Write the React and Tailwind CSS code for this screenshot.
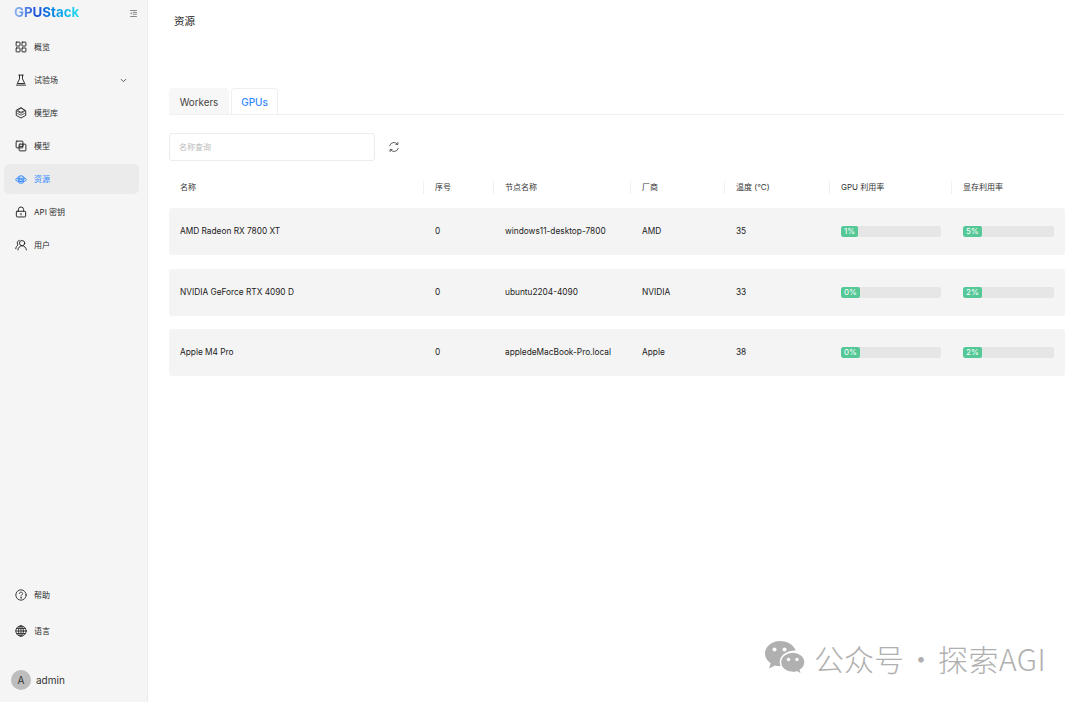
import React from "react";
import { ChevronDown } from "lucide-react";

const Svg = ({ className, children, sw = 1.3 }) => (
  <svg viewBox="0 0 16 16" fill="none" stroke="currentColor" strokeWidth={sw} strokeLinejoin="round" strokeLinecap="round" className={className}>
    {children}
  </svg>
);

const Grid = ({ className }) => (
  <Svg className={className}>
    <rect x="1.500" y="1.500" width="5.200" height="5.200" rx=".5" />
    <rect x="9.300" y="1.500" width="5.200" height="5.200" rx=".5" />
    <rect x="1.500" y="9.300" width="5.200" height="5.200" rx=".5" />
    <rect x="9.300" y="9.300" width="5.200" height="5.200" rx=".5" />
  </Svg>
);

const Flask = ({ className }) => (
  <Svg className={className}>
    <path d="M5 1.500h6M6 1.500v5L3 12.700h10L10 6.500v-5" />
    <path d="M1.800 14.800h12.400" />
  </Svg>
);

const Stack = ({ className }) => (
  <Svg className={className}>
    <path d="M8 1.300 14.300 4.800v6.400L8 14.700 1.700 11.200V4.800z" />
    <path d="M3.500 6 8 8.300 12.500 6M3.500 8.700 8 11l4.500-2.300M8 1.300 3.500 4.800 8 7l4.500-2.200z" strokeWidth="1" />
  </Svg>
);

const Models = ({ className }) => (
  <Svg className={className}>
    <rect x="1.500" y="1.500" width="9" height="9" rx="1" />
    <rect x="5.500" y="5.500" width="9" height="9" rx="1" />
    <path d="M5.500 8.500h5V5.500" />
  </Svg>
);

const Cloud = ({ className }) => (
  <Svg className={className}>
    <path d="M3.600 8a4.400 4.400 0 0 1 8.800 0" />
    <path d="M3.400 6.600C2 6.900 1 7.800 1 8.800c0 1.100 1.100 2 2.600 2.200M12.600 6.600c1.400.3 2.400 1.200 2.400 2.200 0 1.100-1.100 2-2.600 2.200" />
    <rect x="5" y="7" width="6" height="6.400" rx="1" />
    <path d="M5 9.100h6M5 11.200h6" />
  </Svg>
);

const LockI = ({ className }) => (
  <Svg className={className}>
    <rect x="1.800" y="7" width="12.400" height="7.600" rx="1" />
    <path d="M4.500 7V4.800a3.500 3.500 0 0 1 7 0V7M8 9.800v2" />
  </Svg>
);

const UsersI = ({ className }) => (
  <Svg className={className}>
    <circle cx="9.500" cy="5.500" r="3.500" />
    <path d="M3.800 14.500c.5-3 2.800-5.500 5.700-5.500s5.200 2.500 5.700 5.500" />
    <path d="M5.700 1.800C3.900 2.200 3 3.800 3 5.300c0 1 .4 1.900 1 2.600C2.300 9 1.200 11 1 13" />
  </Svg>
);

const Help = ({ className }) => (
  <Svg className={className} sw="1.200">
    <circle cx="8" cy="8" r="6.900" />
    <path d="M5.900 6.200C6 4.900 6.900 4.200 8 4.200c1.200 0 2.100.8 2.100 1.900 0 1.700-2.100 1.700-2.100 3.400" />
    <circle cx="8" cy="11.800" r=".4" />
  </Svg>
);

const GlobeI = ({ className }) => (
  <Svg className={className} sw="1.200">
    <circle cx="8" cy="8" r="6.900" />
    <ellipse cx="8" cy="8" rx="3.200" ry="6.900" />
    <path d="M8 1.100v13.800M1.100 8h13.800M2.100 4.600h11.800M2.100 11.400h11.800" />
  </Svg>
);

const Refresh = ({ className }) => (
  <Svg className={className} sw="1.200">
    <path d="M2.200 6.300A6 6 0 0 1 12.600 4.200" />
    <path d="M13.800 9.700A6 6 0 0 1 3.400 11.800" />
    <path d="M13.200 1.800v2.800h-2.700M2.800 14.200v-2.800h2.700" />
  </Svg>
);

const Indent = ({ className }) => (
  <svg viewBox="0 0 12 12" fill="none" stroke="currentColor" strokeWidth="1" className={className}>
    <path d="M1.500 2h9M5 4.500h5.500M5 7h5.500M1.500 10h9" />
    <path d="M3.500 4.200 1.600 5.800l1.900 1.500z" fill="currentColor" stroke="none" />
  </svg>
);

const Wechat = () => (
  <svg viewBox="0 0 42 36" className="w-[42px] h-[36px]" fill="#b0b0b0">
    <path d="M16 1C7.700 1 1 6.600 1 13.500c0 4 2.200 7.400 5.700 9.700L5 28.500l6-3.100c1.600.4 3.200.7 5 .7.500 0 1 0 1.500-.1-.4-1.300-.6-2.600-.6-3.900 0-6.500 6.100-11.700 13.600-11.700h1.200C29.800 5 23.500 1 16 1z" />
    <path d="M41 22.200c0-5.700-5.500-10.300-12.200-10.300S16.500 16.500 16.500 22.200s5.600 10.300 12.300 10.300c1.400 0 2.800-.2 4-.6l4.900 2.700-1.300-4.400c2.800-1.900 4.600-4.800 4.600-8z" stroke="#fff" strokeWidth="1.500" />
    <circle cx="10.500" cy="9.500" r="2" fill="#fff" />
    <circle cx="20.500" cy="9.500" r="2" fill="#fff" />
    <circle cx="24.500" cy="19.500" r="1.700" fill="#fff" />
    <circle cx="33" cy="19.500" r="1.700" fill="#fff" />
  </svg>
);

const NavItem = ({ icon: I, label, active, chevron }) => (
  <div className={`h-[30px] mb-[3px] ml-1 mr-2 rounded-[5px] flex items-center pl-[11px] pr-[11px] gap-[7px] ${active ? "bg-[#ebebeb] text-[#2f88ff]" : "text-[#2a2a2a]"}`}>
    <I className="w-[12px] h-[12px] shrink-0" />
    <span className="text-[8px] leading-none">{label}</span>
    {chevron && <ChevronDown className="w-[9px] h-[9px] ml-auto" strokeWidth={2} />}
  </div>
);

const Bar = ({ pct, w }) => (
  <div className="h-[11px] bg-[#e6e6e6] rounded-[2px] overflow-hidden w-full">
    <div style={{ width: w }} className="h-full bg-[#54c896] rounded-[2px] text-white text-[8px] leading-[11px] pl-[3px]">{pct}</div>
  </div>
);

const gridCols = "grid grid-cols-[254px_70px_137px_94px_105px_122px_114px]";

const rows = [
  ["AMD Radeon RX 7800 XT", "0", "windows11-desktop-7800", "AMD", "35", ["1%", 17], ["5%", 19], "h-[47px] mb-[14px]"],
  ["NVIDIA GeForce RTX 4090 D", "0", "ubuntu2204-4090", "NVIDIA", "33", ["0%", 19], ["2%", 19], "h-[47px] mb-[13px]"],
  ["Apple M4 Pro", "0", "appledeMacBook-Pro.local", "Apple", "38", ["0%", 19], ["2%", 19], "h-[47px]"],
];

const heads = ["名称", "序号", "节点名称", "厂商", "温度 (°C)", "GPU 利用率", "显存利用率"];

export default function App() {
  return (
    <div className="relative w-[1080px] h-[702px] flex bg-white overflow-hidden font-['Inter','Noto_Sans_CJK_SC',sans-serif] text-[#222]">
      <aside className="w-[148px] shrink-0 h-full bg-[#f5f5f5] border-r border-[#ececec] flex flex-col">
        <div className="h-[26px] flex items-center justify-between pl-[14px] pr-[9px]">
          <span className="text-[13.300px] font-bold leading-none bg-gradient-to-r from-[#93b8f0] via-[#1a48d8] via-35% to-[#2fe0f0] bg-clip-text text-transparent">GPUStack</span>
          <Indent className="w-[9px] h-[9px] text-[#666]" />
        </div>
        <nav className="pt-[6px]">
          <NavItem icon={Grid} label="概览" />
          <NavItem icon={Flask} label="试验场" chevron />
          <NavItem icon={Stack} label="模型库" />
          <NavItem icon={Models} label="模型" />
          <NavItem icon={Cloud} label="资源" active />
          <NavItem icon={LockI} label="API 密钥" />
          <NavItem icon={UsersI} label="用户" />
        </nav>
        <div className="mt-auto">
          <div className="h-[30px] mx-1 flex items-center pl-[11px] gap-[7px] text-[#2a2a2a] mb-[6px]">
            <Help className="w-[12px] h-[12px]" />
            <span className="text-[8px]">帮助</span>
          </div>
          <div className="h-[30px] mx-1 flex items-center pl-[11px] gap-[7px] text-[#2a2a2a] mb-[24px]">
            <GlobeI className="w-[12px] h-[12px]" />
            <span className="text-[8px]">语言</span>
          </div>
          <div className="h-[20px] flex items-center pl-[11px] gap-[5px] mb-[12px]">
            <div className="w-[20px] h-[20px] rounded-full bg-[#bdbdbd] flex items-center justify-center text-[10px] text-[#333]">A</div>
            <span className="text-[10px] text-[#333]">admin</span>
          </div>
        </div>
      </aside>

      <main className="flex-1 pl-[21px] pr-[15px]">
        <div className="h-[89px] pt-[14px] pl-[5px]">
          <h1 className="text-[10.500px] leading-[15px] text-[#222]">资源</h1>
        </div>
        <div className="h-[26px] flex items-end gap-[2px] border-b border-[#f0f0f0] mb-[18px]">
          <div className="h-[26px] w-[60px] pt-[4px] bg-[#f7f7f7] rounded-t-[4px] flex items-center justify-center text-[9.800px] text-[#444]">Workers</div>
          <div className="h-[26px] w-[47px] pt-[2px] bg-white border border-[#f0f0f0] border-b-0 rounded-t-[4px] flex items-center justify-center text-[10px] font-medium text-[#2f88ff]">GPUs</div>
        </div>
        <div className="flex items-center h-[28px] mb-[13px]">
          <div className="w-[206px] h-[28px] border border-[#ececec] rounded-[3px] flex items-center pl-[9px] text-[8px] text-[#bbb]">名称查询</div>
          <Refresh className="w-[12px] h-[12px] ml-[13px] text-[#555]" />
        </div>
        <div className={`${gridCols} h-[26px] items-center mb-[8px] text-[8px] text-[#333]`}>
          {heads.map((h, i) => (
            <div key={h} className={`pl-[11px] h-[13px] leading-[13px] ${i > 0 ? "border-l border-[#f0f0f0]" : ""}`}>{h}</div>
          ))}
        </div>
        {rows.map((r) => (
          <div key={r[0]} className={`${gridCols} ${r[7]} items-center bg-[#f4f4f4] rounded-[3px] text-[8.300px] text-[#222]`}>
            <div className="pl-[11px]">{r[0]}</div>
            <div className="pl-[12px]">{r[1]}</div>
            <div className="pl-[12px]">{r[2]}</div>
            <div className="pl-[12px]">{r[3]}</div>
            <div className="pl-[12px]">{r[4]}</div>
            <div className="pl-[12px] pr-[10px]"><Bar pct={r[5][0]} w={r[5][1]} /></div>
            <div className="pl-[12px] pr-[11px]"><Bar pct={r[6][0]} w={r[6][1]} /></div>
          </div>
        ))}
      </main>

      <div className="absolute left-[764px] top-[640px] flex items-center gap-[8px] text-[#b0b0b0] font-['Noto_Sans_CJK_SC',sans-serif] font-light text-[30px] leading-[36px] whitespace-nowrap">
        <Wechat />
        <span>公众号</span>
        <span className="-ml-[6px] -mr-[6px]">·</span>
        <span className="tracking-[0.500px]">探索AGI</span>
      </div>
    </div>
  );
}
